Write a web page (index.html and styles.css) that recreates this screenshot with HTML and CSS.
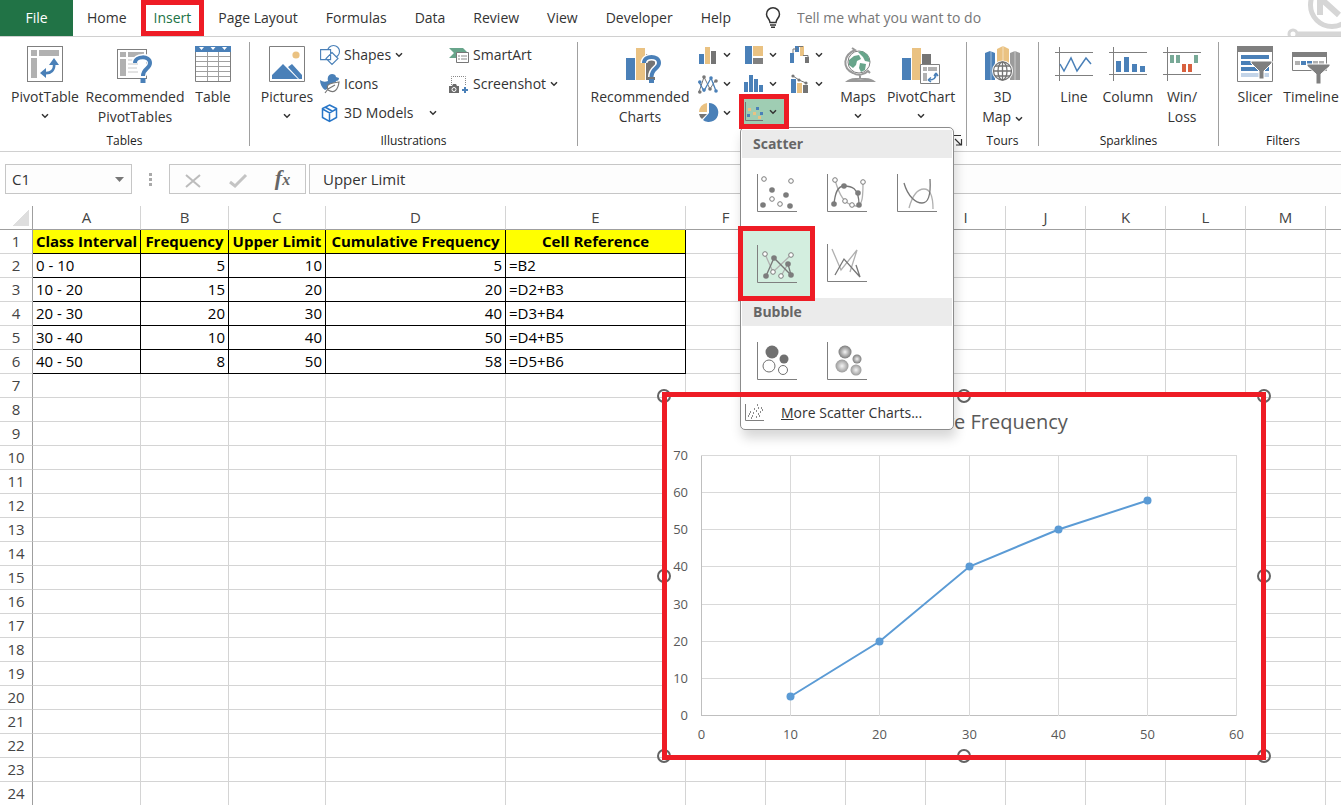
FILE: index.html
```html
<!DOCTYPE html>
<html lang="en">
<head>
    <meta charset="UTF-8">
    <title>Cumulative Frequency</title>
    <link rel="stylesheet" href="styles.css">
</head>
<body>
<svg class="symbols" width="0" height="0">
    <symbol id="chevron" viewBox="0 0 8 6"><path d="M1 1.2 L4 4.2 L7 1.2" fill="none" stroke="#333" stroke-width="1.5"/></symbol>
    <symbol id="axes" viewBox="0 0 40 38"><path d="M.5 0 V37.500 H40" fill="none" stroke="#7f7f7f"/></symbol>
    <radialGradient id="ball"><stop offset="0" stop-color="#f4f4f4"/><stop offset="1" stop-color="#7c7c7c"/></radialGradient>
    <radialGradient id="ballLight"><stop offset="0" stop-color="#f4f4f4"/><stop offset="1" stop-color="#9a9a9a"/></radialGradient>
</svg>

<nav class="tabs">
    <button class="tab file">File</button>
    <button class="tab">Home</button>
    <button class="tab selected">Insert</button>
    <button class="tab">Page Layout</button>
    <button class="tab">Formulas</button>
    <button class="tab">Data</button>
    <button class="tab">Review</button>
    <button class="tab">View</button>
    <button class="tab">Developer</button>
    <button class="tab">Help</button>
    <label class="tell">
        <svg width="16" height="22" viewBox="0 0 16 22" fill="none" stroke="#333" stroke-width="1.5"><path d="M5 15.5 C5 12 1.5 11 1.5 7.2 A6.3 6.3 0 0 1 14.5 7.2 C14.5 11 11 12 11 15.5 Z M5 18 H11 M6 20.2 H10"/></svg>
        <input type="text" placeholder="Tell me what you want to do">
    </label>
    <svg class="watermark" width="54" height="36" viewBox="0 0 54 36" fill="none" stroke="#d6d6d6"><circle cx="45" cy="5" r="21.5" stroke-width="5"/><path d="M33 15 V-4 M31 -4 L52 15" stroke-width="6"/><circle cx="6" cy="34" r="4" stroke-width="3"/><path d="M11 34 H54" stroke-width="5"/></svg>
</nav>

<section class="ribbon">
    <div class="group tables">
        <div class="tools">
            <button class="big">
                <svg width="36" height="36" viewBox="0 0 36 36"><rect x=".5" y=".5" width="35" height="35" fill="#fff" stroke="#7f7f7f"/><path d="M4 4h6v6H4zM12 4h20v6H12zM4 12h6v20H4z" fill="#b1b1b1"/><path d="M17 27 C24 28 28 24 27 17" fill="none" stroke="#4a80b8" stroke-width="2.6"/><path d="M13 27l6-5v10zM27 12l5 7H22z" fill="#4a80b8"/></svg>
                <span>PivotTable</span>
                <svg class="chev" width="8" height="6"><use href="#chevron"/></svg>
            </button>
            <button class="big wide">
                <svg width="36" height="36" viewBox="0 0 36 36"><rect x=".5" y="3.5" width="29" height="29" fill="#fff" stroke="#7f7f7f"/><path d="M3 6h6v5H3zM11 6h16v5H11zM3 13h6v17H3z" fill="#b1b1b1"/><path d="M11 14h7M11 18h10M11 22h9M11 26h10" stroke="#c8c8c8"/><path d="M18 17 C18 10 33 9 33 17 C33 23 26 22 26 30" fill="none" stroke="#fff" stroke-width="7"/><path d="M18 17 C18 10 33 9 33 17 C33 23 26 22 26 30" fill="none" stroke="#4a80b8" stroke-width="4"/><path d="M23.500 32h5v5h-5z" fill="#4a80b8"/></svg>
                <span>Recommended PivotTables</span>
            </button>
            <button class="big slim">
                <svg width="36" height="36" viewBox="0 0 36 36"><path d="M.5 .5h35v35H.5z" fill="#fff" stroke="#7f7f7f"/><path d="M1 10.500h34M1 15.500h34M1 20.500h34M1 25.500h34M1 30.500h34M12.500 6v29M23.500 6v29" stroke="#a0a0a0"/><path d="M0 0h36v6H0z" fill="#4a80b8"/><path d="M4 1h5l-2.500 3zM15.500 1h5L18 4zM27 1h5l-2.500 3z" fill="#fff"/></svg>
                <span>Table</span>
            </button>
        </div>
        <div class="caption">Tables</div>
    </div>

    <div class="group illustrations">
        <div class="tools">
            <button class="big slim">
                <svg width="36" height="36" viewBox="0 0 36 36"><path d="M.5 .5h35v35H.5z" fill="#fff" stroke="#7f7f7f"/><circle cx="27" cy="9" r="3.600" fill="#eac282"/><path d="M3 33v-4l11-11 15 15zM19 21l4-3 10 11v4h-3z" fill="#4a80b8"/></svg>
                <span>Pictures</span>
                <svg class="chev" width="8" height="6"><use href="#chevron"/></svg>
            </button>
            <div class="stack first">
                <button class="small">
                    <svg width="20" height="20" viewBox="0 0 20 20" fill="#fff" stroke="#4a80b8" stroke-width="1.1"><circle cx="13.500" cy="6.500" r="6"/><path d="M.6 4.600h10v10H.6zM12 7.500l6 6-6 6-6-6z"/></svg>
                    Shapes
                    <svg class="chev" width="8" height="6"><use href="#chevron"/></svg>
                </button>
                <button class="small">
                    <svg width="20" height="20" viewBox="0 0 20 20"><path d="M0 6c3 2 5 2 8 1C7 3 9 0 12 0c2 0 4 1 4 3l3 1c0 2-1 3-3 3 0 2-4 2-6 4-2 2-3 5-5 5C2 14 0 10 0 6z" fill="#4a80b8"/><path d="M5 19l3-4c-3-5 4-6 11-7-1 8-5 12-11 8M8 15l7-4" fill="#fff" stroke="#777" stroke-width="1.200"/></svg>
                    Icons
                </button>
                <button class="small">
                    <svg width="20" height="20" viewBox="0 0 20 20" fill="none" stroke="#2876c8" stroke-width="1.500"><path d="M9.500 2l7 3.500v9l-7 4-7-4v-9zM9.500 10v8M2.500 6l7 4 7-4M5 4l7 4"/></svg>
                    3D Models
                    <svg class="chev far" width="8" height="6"><use href="#chevron"/></svg>
                </button>
            </div>
            <div class="stack">
                <button class="small">
                    <svg width="20" height="20" viewBox="0 0 20 20"><path d="M0 3h14l4 4v1H7v5H0l5-5z" fill="#68a58b"/><path d="M7.500 7.500h12v10h-12z" fill="#fff" stroke="#777"/><path d="M9 11h2M12 11h6M9 14h2M12 14h6" stroke="#888"/></svg>
                    SmartArt
                </button>
                <button class="small">
                    <svg width="20" height="20" viewBox="0 0 20 20"><path d="M2.500 11V2.500h14V12" fill="none" stroke="#888" stroke-dasharray="1 1"/><path d="M0 12h3l1-2h3l1 2h2v7H0z" fill="#6b6b6b"/><path d="M13 15h2v-2h2v2h2v2h-2v2h-2v-2h-2z" fill="#4a80b8"/><circle cx="5" cy="15.500" r="2" stroke="#fff" fill="#6b6b6b"/></svg>
                    Screenshot
                    <svg class="chev" width="8" height="6"><use href="#chevron"/></svg>
                </button>
            </div>
        </div>
        <div class="caption">Illustrations</div>
    </div>

    <div class="group charts">
        <div class="tools">
            <button class="big wide">
                <svg width="36" height="36" viewBox="0 0 36 36"><g transform="translate(4 0)"><path d="M0 12h9v22H0z" fill="#4a80b8"/><path d="M10 2h9v32h-9z" fill="#eac282"/><path d="M20 8h9v26h-9z" fill="#747474"/><path d="M18 17 C18 9 33 9 33 17 C33 23 25.500 22 25.500 31" fill="none" stroke="#fff" stroke-width="7"/><path d="M18 17 C18 9 33 9 33 17 C33 23 25.500 22 25.500 31" fill="none" stroke="#4a80b8" stroke-width="4"/><path d="M23 33h5v4h-5z" fill="#4a80b8"/></g></svg>
                <span>Recommended Charts</span>
            </button>
            <div class="kinds">
                <button class="kind" aria-label="Column"><svg width="20" height="20" viewBox="0 0 20 20"><path d="M1 9h5v10H1z" fill="#4a80b8"/><path d="M7 2h5v17H7z" fill="#eac282"/><path d="M13 6h5v13h-5z" fill="#747474"/></svg><svg width="8" height="6"><use href="#chevron"/></svg></button>
                <button class="kind" aria-label="Hierarchy"><svg width="20" height="20" viewBox="0 0 20 20"><path d="M1 1h7v18H1z" fill="#4a80b8"/><path d="M9 1h10v10H9z" fill="#eac282"/><path d="M9 13h10v6H9z" fill="#808080"/></svg><svg width="8" height="6"><use href="#chevron"/></svg></button>
                <button class="kind" aria-label="Waterfall"><svg width="20" height="20" viewBox="0 0 20 20"><path d="M0 8h4v10H0zM5 1h4v6H5z" fill="#4a80b8"/><path d="M10 1h4v10h-4z" fill="#eac282"/><path d="M15 12h4v6h-4z" fill="#747474"/><path d="M3 8V4h4M8 1.500h5M13 10.500h5v3" stroke="#777" fill="none"/></svg><svg width="8" height="6"><use href="#chevron"/></svg></button>
                <button class="kind" aria-label="Line"><svg width="20" height="20" viewBox="0 0 20 20"><path d="M1 18L6 3l6 12 5-8" fill="none" stroke="#777"/><path d="M1 8l5 9 7-13 5 13" fill="none" stroke="#4a80b8" stroke-width="1.300"/><g fill="#4a80b8"><circle cx="1.800" cy="8" r="1.800"/><circle cx="6" cy="16" r="1.800"/><circle cx="13" cy="4" r="1.800"/><circle cx="18" cy="17" r="1.800"/></g><g fill="#777"><circle cx="1.800" cy="18" r="1.800"/><circle cx="6" cy="3" r="1.800"/><circle cx="12" cy="15" r="1.800"/><circle cx="18" cy="7" r="1.800"/></g></svg><svg width="8" height="6"><use href="#chevron"/></svg></button>
                <button class="kind" aria-label="Statistic"><svg width="20" height="20" viewBox="0 0 20 20"><path d="M0 8h4v10H0zM5 1h4v17H5zM10 5h4v13h-4zM15 11h4v7h-4z" fill="#4a80b8"/></svg><svg width="8" height="6"><use href="#chevron"/></svg></button>
                <button class="kind" aria-label="Combo"><svg width="20" height="20" viewBox="0 0 20 20"><path d="M1 5h5v14H1z" fill="#4a80b8"/><path d="M7 9h5v10H7z" fill="#eac282"/><path d="M13 11h5v8h-5z" fill="#747474"/><path d="M3 2l6 4 7 3" fill="none" stroke="#777"/><g fill="#777"><circle cx="3" cy="2" r="1.600"/><circle cx="9" cy="6" r="1.600"/><circle cx="16" cy="9" r="1.600"/></g></svg><svg width="8" height="6"><use href="#chevron"/></svg></button>
                <button class="kind" aria-label="Pie"><svg width="20" height="20" viewBox="0 0 20 20"><path d="M11 0a9.500 9.500 0 1 1-6 17l6-7z" fill="#4a80b8"/><path d="M9 0v9H1a9 9 0 0 1 8-9z" fill="#eac282"/><path d="M1 11h8l-5 5a8 8 0 0 1-3-5z" fill="#747474"/></svg><svg width="8" height="6"><use href="#chevron"/></svg></button>
                <div class="picker">
                    <button class="kind open" aria-label="Scatter"><svg width="20" height="20" viewBox="0 0 20 20"><path d="M1.500 0v18.500H19" fill="none" stroke="#747474"/><path d="M12 5h3v3h-3zM3 12h3v3H3zM16 10h3v3h-3z" fill="#4a80b8"/><path d="M4 6h3v3H4zM9 10h3v3H9zM14 14h3v3h-3z" fill="#eac282"/></svg><svg width="8" height="6"><use href="#chevron"/></svg></button>
                    <div class="menu">
                        <h2>Scatter</h2>
                        <div class="choices">
                            <button aria-label="Scatter"><svg width="40" height="38"><use href="#axes"/><g fill="#7c7c7c"><circle cx="15" cy="16" r="2.800"/><circle cx="29" cy="21" r="2.800"/><circle cx="6" cy="31" r="2.800"/><circle cx="33" cy="32" r="2.800"/></g><g fill="#fff" stroke="#7c7c7c"><circle cx="7" cy="5" r="2.300"/><circle cx="34" cy="7" r="2.300"/><circle cx="15" cy="25" r="2.300"/><circle cx="23" cy="30" r="2.300"/></g></svg></button>
                            <button aria-label="Smooth lines and markers"><svg width="40" height="38"><use href="#axes"/><g fill="none" stroke-width="1.300"><path d="M8 6C12 20 17 31 29 32c7 1 7-12 7-24" stroke="#b0b0b0"/><path d="M7 30C8 20 10 12 17 12s15 1 15 19" stroke="#777"/></g><g fill="#7c7c7c"><circle cx="7" cy="30" r="2.800"/><circle cx="17" cy="12" r="2.800"/><circle cx="31" cy="19" r="2.800"/><circle cx="32" cy="31" r="2.800"/></g><g fill="#fff" stroke="#7c7c7c"><circle cx="8" cy="6" r="2.300"/><circle cx="36" cy="8" r="2.300"/><circle cx="18" cy="27" r="2.300"/><circle cx="25" cy="31" r="2.300"/></g></svg></button>
                            <button aria-label="Smooth lines"><svg width="40" height="38"><use href="#axes"/><g fill="none" stroke-width="1.300"><path d="M12 34C15 23 20 15 27 15s9 8 9 20" stroke="#b0b0b0"/><path d="M7 9c4 14 12 20 18 20s9-7 8-24" stroke="#777"/></g></svg></button>
                            <button class="chosen" aria-label="Straight lines and markers"><svg width="40" height="38"><use href="#axes"/><g fill="none" stroke-width="1.300"><path d="M8 9l8 18L34 10M24 31l8-14" stroke="#b0b0b0"/><path d="M9 31l8-18 17 17-3-11" stroke="#777"/></g><g fill="#7c7c7c"><circle cx="9" cy="31" r="2.800"/><circle cx="17" cy="13" r="2.800"/><circle cx="31" cy="19" r="2.800"/><circle cx="34" cy="30" r="2.800"/></g><g fill="#fff" stroke="#7c7c7c"><circle cx="8" cy="9" r="2.300"/><circle cx="34" cy="10" r="2.300"/><circle cx="16" cy="27" r="2.300"/><circle cx="24" cy="31" r="2.300"/></g></svg></button>
                            <button aria-label="Straight lines"><svg width="40" height="38"><use href="#axes"/><g fill="none" stroke-width="1.300"><path d="M5 5l9 21L30 6l-7 22" stroke="#b0b0b0"/><path d="M8 31l9-16 16 18-4-12" stroke="#777"/></g></svg></button>
                        </div>
                        <h2>Bubble</h2>
                        <div class="choices">
                            <button aria-label="Bubble"><svg width="40" height="38"><use href="#axes"/><g fill="#707070"><circle cx="15" cy="10" r="6.500"/><circle cx="27" cy="17" r="4.500"/></g><g fill="#fff" stroke="#707070"><circle cx="12" cy="24" r="6"/><circle cx="26" cy="28" r="4.500"/></g></svg></button>
                            <button aria-label="3-D Bubble"><svg width="40" height="38"><use href="#axes"/><circle cx="18" cy="10" r="6.500" fill="url(#ball)"/><circle cx="30" cy="17" r="4.500" fill="url(#ball)"/><circle cx="15" cy="24" r="6.500" fill="url(#ballLight)"/><circle cx="29" cy="28" r="5.500" fill="url(#ballLight)"/></svg></button>
                        </div>
                        <button class="more">
                            <svg width="20" height="18" viewBox="0 0 20 18"><path d="M.5 0v16.500H19" fill="none" stroke="#7f7f7f"/><path d="M3 12h1M5 8h1M7 12h1M9 5h1M8 9h1M12 1h1M11 7h1M13 10h1M16 4h1M15 8h1M13 4h1M6 14h1M11 13h1M4 10h1M14 12h1M17 6h1" stroke="#666" stroke-width="1.500"/></svg>
                            <span><u>M</u>ore Scatter Charts...</span>
                        </button>
                    </div>
                </div>
            </div>
            <button class="big maps">
                <svg width="36" height="36" viewBox="0 0 36 36"><circle cx="19" cy="16" r="11" fill="#fff" stroke="#808080"/><path d="M9 14l5-4 5-1 2 4-4 2-1 4-3 3-4-3zM18 6l4-1 6 4 2 7-5-1-2-4zM20 17l6 1-1 6-4 2-2-4z" fill="#68a58b"/><path d="M12 2l3 2C3 9 2 22 13 27c5 3 11 2 15-2l2 2M20 28v5M8 35c4-3 21-3 25 0z" fill="none" stroke="#999" stroke-width="2"/></svg>
                <span>Maps</span>
                <svg class="chev" width="8" height="6"><use href="#chevron"/></svg>
            </button>
            <button class="big pivot">
                <svg width="38" height="36" viewBox="0 0 38 36"><path d="M0 12h9v22H0z" fill="#4a80b8"/><path d="M10 2h9v32h-9z" fill="#eac282"/><path d="M20 8h9v26h-9z" fill="#747474"/><path d="M18.500 18.500h19v19h-19z" fill="#fff" stroke="#808080"/><path d="M21 21h4v4h-4zM26 21h9v4h-9zM21 27h4v8h-4z" fill="#b1b1b1"/><path d="M27 34c5 0 7-2 7-6M26 34l3-2.500M26 34l3 2M34 27l-2 3M34 27l2 3" fill="none" stroke="#4a80b8" stroke-width="1.500"/></svg>
                <span>PivotChart</span>
                <svg class="chev" width="8" height="6"><use href="#chevron"/></svg>
            </button>
        </div>
        <button class="launcher" aria-label="Chart options"><svg width="9" height="11" viewBox="0 0 9 11" fill="none" stroke="#333"><path d="M0 .5h7M1 4l6 6M7.500 4v6H2" stroke-width="1.200"/></svg></button>
    </div>

    <div class="group tours">
        <div class="tools">
            <button class="big">
                <svg width="36" height="36" viewBox="0 0 36 36"><path d="M0 7l5-2 5 2v27H0z" fill="#4a80b8"/><path d="M12 3l6-3 6 3v16H12z" fill="#eac282"/><path d="M25 7l5-2 5 2v27H25z" fill="#9b9b9b"/><path d="M6 5v29M18 0v18M30 5v29" stroke="#fff" opacity=".5"/><circle cx="17.500" cy="25" r="10.500" fill="#fff"/><g fill="none" stroke="#747474" stroke-width="1.300"><circle cx="17.500" cy="25" r="9"/><ellipse cx="17.500" cy="25" rx="4.500" ry="9"/><path d="M8 25h19M10 20h15M10 30h15M17.500 16v18"/></g></svg>
                <span>3D<br>Map <svg width="8" height="6"><use href="#chevron"/></svg></span>
            </button>
        </div>
        <div class="caption">Tours</div>
    </div>

    <div class="group sparklines">
        <div class="tools">
            <button class="big">
                <svg width="38" height="36" viewBox="0 0 38 36"><path d="M0 6.500h38M0 29.500h38M4.500 1v34" stroke="#7f7f7f"/><path d="M5 18l4 7 7-13 6 13 9-13 5 6" fill="none" stroke="#4a80b8" stroke-width="1.500"/></svg>
                <span>Line</span>
            </button>
            <button class="big">
                <svg width="38" height="36" viewBox="0 0 38 36"><path d="M0 6.500h38M0 28.500h38M4.500 1v34" stroke="#7f7f7f"/><path d="M7 15h5v11H7zM15 11h5v15h-5zM23 18h5v8h-5zM31 20h5v6h-5z" fill="#4a80b8"/></svg>
                <span>Column</span>
            </button>
            <button class="big">
                <svg width="38" height="36" viewBox="0 0 38 36"><path d="M0 6.500h38M0 28.500h38M4.500 1v34" stroke="#7f7f7f"/><path d="M7 9h4v8H7zM13 9h4v8h-4zM31 9h4v8h-4z" fill="#78a997"/><path d="M19 18h4v8h-4zM25 18h4v8h-4z" fill="#d8603e"/></svg>
                <span>Win/<br>Loss</span>
            </button>
        </div>
        <div class="caption">Sparklines</div>
    </div>

    <div class="group filters">
        <div class="tools">
            <button class="big">
                <svg width="36" height="36" viewBox="0 0 36 36"><path d="M.5 .5h35v35H.5z" fill="#fff" stroke="#7f7f7f"/><path d="M0 0h36v6H0z" fill="#7f7f7f"/><path d="M4 9h28v4H4zM4 15h28v4H4zM4 21h28v4H4z" fill="#4a80b8"/><path d="M4 27h28v4H4z" fill="#c3d4e8"/><path d="M14 15h21v2l-8 8v8h-5v-8l-8-8z" fill="#7f7f7f" stroke="#fff"/></svg>
                <span>Slicer</span>
            </button>
            <button class="big timeline">
                <svg width="38" height="36" viewBox="0 0 38 36"><path d="M.5 6.500h34v18H.5z" fill="#fff" stroke="#7f7f7f"/><path d="M0 6h35v5H0z" fill="#7f7f7f"/><path d="M3 15h5v4H3zM21 15h5v4h-5zM27 15h5v4h-5z" fill="#b1b1b1"/><path d="M9 15h5v4H9zM15 15h5v4h-5z" fill="#4a80b8"/><path d="M15 18h23v2l-9 8v10h-5V28l-9-8z" fill="#7f7f7f" stroke="#fff"/></svg>
                <span>Timeline</span>
            </button>
        </div>
        <div class="caption">Filters</div>
    </div>
</section>

<section class="formula-bar">
    <label class="name-box">
        <input type="text" value="C1" aria-label="Name box">
        <svg width="9" height="5"><path d="M0 0h9L4.500 5z" fill="#777"/></svg>
    </label>
    <svg class="dots" width="3" height="13"><path d="M0 0h3v3H0zM0 5h3v3H0zM0 10h3v3H0z" fill="#aaa"/></svg>
    <div class="entry">
        <button aria-label="Cancel"><svg width="16" height="14" fill="none" stroke="#bcbcbc" stroke-width="2"><path d="M1 1l14 12M15 1L1 13"/></svg></button>
        <button aria-label="Enter"><svg width="18" height="14" fill="none" stroke="#c4c4c4" stroke-width="3"><path d="M1 8l5 4L17 1"/></svg></button>
        <button class="fx" aria-label="Insert function">f<small>x</small></button>
    </div>
    <input class="formula" type="text" value="Upper Limit" aria-label="Formula">
</section>

<main class="sheet">
    <table id="grid"></table>
    <div class="chart">
        <svg viewBox="0 0 600 360" width="600" height="360">
            <rect x=".5" y=".5" width="599" height="359" fill="#fff" stroke="#bfbfbf"/>
            <text class="chart-title" x="300" y="33">Cumulative Frequency</text>
            <g id="plot"></g>
        </svg>
    </div>
    <div class="frame"></div>
</main>

<script>
    var widths = [33, 108, 88, 97, 180, 180, 80, 80, 80, 80, 80, 80, 80, 80, 80];
    var letters = ['', 'A', 'B', 'C', 'D', 'E', 'F', 'G', 'H', 'I', 'J', 'K', 'L', 'M', ''];
    var data = [
        ['Class Interval', 'Frequency', 'Upper Limit', 'Cumulative Frequency', 'Cell Reference'],
        ['0 - 10', 5, 10, 5, '=B2'],
        ['10 - 20', 15, 20, 20, '=D2+B3'],
        ['20 - 30', 20, 30, 40, '=D3+B4'],
        ['30 - 40', 10, 40, 50, '=D4+B5'],
        ['40 - 50', 8, 50, 58, '=D5+B6']
    ];

    var html = '<colgroup>';
    for (var i = 0; i < widths.length; i++) {
        html += '<col style="width:' + widths[i] + 'px">';
    }
    html += '</colgroup><thead><tr>';
    for (i = 0; i < letters.length; i++) {
        html += '<th>' + letters[i] + '</th>';
    }
    html += '</tr></thead><tbody>';
    for (var r = 0; r < 24; r++) {
        html += '<tr><th>' + (r + 1) + '</th>';
        for (var c = 0; c < letters.length - 1; c++) {
            if (data[r] && c < 5) {
                var cls = r == 0 ? 'head' : (typeof data[r][c] == 'number' ? 'filled num' : 'filled');
                html += '<td class="' + cls + '">' + data[r][c] + '</td>';
            } else {
                html += '<td></td>';
            }
        }
        html += '</tr>';
    }
    document.getElementById('grid').innerHTML = html + '</tbody>';

    // plot area: x 0-60 over 535px, y 0-70 over 260px
    function px(x) { return 37.5 + Math.round(x * 535 / 60); }
    function py(y) { return 319.5 - Math.round(y * 260 / 70); }

    var plot = '';
    for (var y = 0; y <= 70; y += 10) {
        plot += '<path class="' + (y ? 'line' : 'axis') + '" d="M37 ' + py(y) + 'H573"/>';
        plot += '<text class="tick left" x="24" y="' + (py(y) + 4) + '">' + y + '</text>';
    }
    for (var x = 0; x <= 60; x += 10) {
        plot += '<path class="' + (x ? 'line' : 'axis') + '" d="M' + px(x) + ' 60V320"/>';
        plot += '<text class="tick" x="' + px(x) + '" y="343">' + x + '</text>';
    }
    var points = '';
    var dots = '';
    for (r = 1; r < data.length; r++) {
        points += px(data[r][2]) + ',' + py(data[r][3]) + ' ';
        dots += '<circle class="dot" cx="' + px(data[r][2]) + '" cy="' + py(data[r][3]) + '" r="4"/>';
    }
    plot += '<polyline class="series" points="' + points + '"/>' + dots;
    for (x = 0; x <= 600; x += 300) {
        for (y = 0; y <= 360; y += 180) {
            if (x != 300 || y != 180) {
                plot += '<circle class="handle" cx="' + x + '" cy="' + y + '" r="6"/>';
            }
        }
    }
    document.getElementById('plot').innerHTML = plot;
</script>
</body>
</html>
```
FILE: styles.css
```css
* {
    margin: 0;
    padding: 0;
    box-sizing: border-box;
}

body {
    height: 100vh;
    display: flex;
    flex-direction: column;
    overflow: hidden;
    background: #fff;
    color: #333;
    font: 14px/20px "Open Sans", "Noto Sans", sans-serif;
}

button, input {
    font: inherit;
    color: inherit;
    background: none;
    border: 0;
    outline: 0;
}

svg {
    flex: none;
    overflow: visible;
}

.symbols {
    position: absolute;
}

/* tabs */
.tabs {
    display: flex;
    height: 37px;
    flex: none;
    border-bottom: 1px solid #d0d0d0;
}

.tab {
    padding: 0 14px;
    white-space: nowrap;
}

.tab.file {
    width: 73px;
    background: #217346;
    color: #fff;
}

.tab.selected {
    padding: 0 8px;
    border: 5px solid #ee1c25;
    color: #217346;
}

.tell {
    display: flex;
    align-items: center;
    gap: 16px;
    flex: 1;
    padding-left: 20px;
}

.tell input {
    flex: 1;
    min-width: 0;
}

.tell input::placeholder {
    color: #777;
    opacity: 1;
}

.watermark {
    overflow: hidden;
}

/* ribbon */
.ribbon {
    display: flex;
    height: 115px;
    flex: none;
    border-bottom: 1px solid #d0d0d0;
}

.group {
    display: flex;
    flex-direction: column;
    flex: none;
    margin: 5px 0;
    border-right: 1px solid #a0a0a0;
    position: relative;
}

.filters {
    border: 0;
}

.tools {
    display: flex;
    flex: 1;
}

.caption {
    text-align: center;
    font-size: 12px;
    line-height: 10px;
    color: #222;
}

.big {
    display: flex;
    flex-direction: column;
    align-items: center;
    width: 80px;
    padding-top: 4px;
}

.big span {
    margin-top: 5px;
}

.big .chev {
    margin-top: 6px;
}

.big.wide {
    width: 100px;
}

.big.slim {
    width: 56px;
}

.tables .tools {
    padding: 0 8px 0 5px;
}

.illustrations .tools {
    padding: 0 17px 0 9px;
}

.stack {
    display: flex;
    flex-direction: column;
    align-items: flex-start;
    width: 111px;
    margin-top: -2px;
}

.stack.first {
    width: 129px;
    margin-left: 5px;
}

.small {
    display: flex;
    align-items: center;
    gap: 4px;
    height: 29px;
    white-space: nowrap;
}

.far {
    margin-left: 12px;
}

.charts .tools {
    padding: 0 12px;
}

.kinds {
    display: grid;
    grid-template-columns: repeat(3, 46px);
    grid-auto-rows: 29px;
    margin: -2px 0 0 8px;
}

.kind {
    display: flex;
    align-items: center;
    gap: 5px;
    height: 29px;
}

.picker {
    position: relative;
}

/* the frame sticks out over the neighbouring buttons */
.kind.open {
    position: absolute;
    left: -5px;
    top: -4px;
    z-index: 6;
    width: 50px;
    height: 35px;
    border: 5px solid #ee1c25;
    background: #9fcdb3;
}

.maps {
    width: 60px;
    margin-left: -8px;
}

.pivot {
    width: 66px;
}

.launcher {
    position: absolute;
    right: 3px;
    bottom: 0;
    height: 11px;
    line-height: 0;
}

.tours .big {
    width: 71px;
}

.sparklines .tools {
    padding: 0 9px 0 8px;
}

.sparklines .big {
    width: 54px;
}

.filters .tools {
    padding: 0 8px;
}

.filters .big {
    width: 56px;
}

/* drop-down of the scatter button */
.menu {
    position: absolute;
    left: -4px;
    top: 29px;
    z-index: 5;
    width: 214px;
    padding: 2px 1px 0;
    border: 1px solid #8c8c8c;
    border-radius: 5px;
    background: #fff;
    box-shadow: 2px 8px 12px rgba(0, 0, 0, .16);
}

.menu h2 {
    height: 28px;
    padding-left: 11px;
    background: #ebebeb;
    color: #666;
    font-size: 14px;
    line-height: 28px;
}

.choices {
    display: grid;
    grid-template-columns: repeat(3, 70px);
    grid-auto-rows: 70px;
}

.choices button {
    display: flex;
    align-items: center;
    justify-content: center;
}

.choices .chosen {
    margin: -2px -3px -3px -4px;
    border: 5px solid #ee1c25;
    background: #d3eedf;
    z-index: 1;
}

.more {
    display: flex;
    align-items: center;
    gap: 16px;
    width: 100%;
    height: 33px;
    padding-left: 3px;
}

/* formula bar */
.formula-bar {
    display: flex;
    align-items: center;
    flex: none;
    height: 54px;
    padding-left: 5px;
    font-size: 15px;
}

.name-box, .entry, .formula {
    height: 30px;
    border: 1px solid #c6c6c6;
    background: #fdfdfd;
}

.name-box {
    display: flex;
    align-items: center;
    width: 127px;
    padding: 0 7px 0 6px;
}

.name-box input {
    flex: 1;
    min-width: 0;
}

.dots {
    margin: 0 17px;
}

.entry {
    display: flex;
    width: 137px;
}

.entry button {
    flex: 1;
}

.entry svg {
    vertical-align: middle;
}

.entry .fx {
    font: italic bold 22px/22px "Liberation Serif", serif;
    color: #666;
}

.fx small {
    font-size: 16px;
}

.formula {
    flex: 1;
    margin-left: 3px;
    padding-left: 13px;
    border-right: 0;
}

/* sheet */
.sheet {
    position: relative;
    flex: 1;
    overflow: hidden;
}

#grid {
    width: 0;
    table-layout: fixed;
    border-collapse: separate;
    border-spacing: 0;
    color: #000;
    font-size: 15px;
}

#grid th, #grid td {
    height: 24px;
    border-right: 1px solid #d4d4d4;
    border-bottom: 1px solid #d4d4d4;
    line-height: 23px;
    white-space: nowrap;
}

#grid th {
    font-weight: normal;
    color: #444;
}

#grid thead th {
    border-bottom-color: #9f9f9f;
}

#grid tbody th, #grid thead th:first-child {
    border-right-color: #9f9f9f;
}

#grid thead th:first-child {
    background: linear-gradient(135deg, transparent 50%, #dedede 50%) 13px 4px / 16px 16px no-repeat;
}

#grid .head, #grid .filled {
    border-color: #000;
}

#grid .head {
    background: #ff0;
    font-weight: bold;
    text-align: center;
}

#grid .filled {
    padding: 0 3px;
}

#grid .num {
    text-align: right;
}

.chart {
    position: absolute;
    left: 664px;
    top: 190px;
}

.chart svg {
    display: block;
}

/* red frame runs over the open menu too */
.frame {
    position: absolute;
    left: 662px;
    top: 186px;
    width: 604px;
    height: 368px;
    z-index: 10;
    border: 5px solid #ee1c25;
    pointer-events: none;
}

.chart-title {
    fill: #595959;
    font-size: 20px;
    text-anchor: middle;
}

.tick {
    fill: #595959;
    font-size: 13px;
    text-anchor: middle;
}

.tick.left {
    text-anchor: end;
}

.line {
    stroke: #d9d9d9;
}

.axis {
    stroke: #bfbfbf;
}

.series {
    fill: none;
    stroke: #5b9bd5;
    stroke-width: 2;
}

.dot {
    fill: #5b9bd5;
}

.handle {
    fill: none;
    stroke: #636363;
    stroke-width: 2;
}
```
